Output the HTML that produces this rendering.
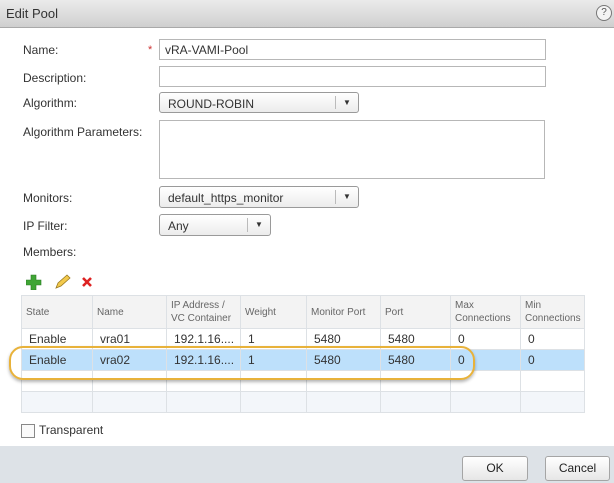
<!DOCTYPE html>
<html><head><style>
body{margin:0;width:614px;height:483px;position:relative;overflow:hidden;background:#fff;font-family:"Liberation Sans",sans-serif;font-size:12px;color:#333}
.a{position:absolute}
.lbl{position:absolute;left:23px;color:#333}
.in{position:absolute;border:1px solid #b7b7b7;background:#fff;box-sizing:border-box;padding:3px 5px;font-size:12px}
.sel{position:absolute;border:1px solid #9a9a9a;border-radius:3px;background:linear-gradient(#fff,#ececec);box-sizing:border-box;padding:4px 8px;font-size:12px}
.sel .ar{position:absolute;right:0;top:3px;bottom:3px;width:22px;border-left:1px solid #bbb;text-align:center;font-size:8px;line-height:14px}
table{position:absolute;left:21px;top:295px;width:563px;border-collapse:collapse;table-layout:fixed}
td{border:1px solid #dde1e5;padding:0 7px;height:20px;line-height:20px;font-size:12px;white-space:nowrap;overflow:hidden}
th{border:1px solid #dde1e5;background:#f3f3f3;font-weight:normal;text-align:left;color:#666;font-size:10px;padding:0 4px;height:32px;line-height:13px}
.btn{position:absolute;border:1px solid #a5a5a5;border-radius:3px;background:linear-gradient(#fff,#e6e6e6);text-align:center;line-height:23px;font-size:12px;color:#222}
</style></head><body>
<div class="a" style="left:0;top:0;width:614px;height:27px;background:linear-gradient(#ebebeb,#cfcfcf);border-bottom:1px solid #a9a9a9"></div>
<div class="a" style="left:6px;top:6px;font-size:13px;color:#333">Edit Pool</div>
<div class="a" style="left:596px;top:5px;width:14px;height:14px;border:1px solid #777;border-radius:50%;font-size:10px;text-align:center;line-height:14px;color:#555;background:#f4f4f4">?</div>

<div class="lbl" style="top:43px">Name:</div>
<div class="a" style="left:148px;top:44px;color:#c33;font-size:11px">*</div>
<div class="in" style="left:159px;top:39px;width:387px;height:21px">vRA-VAMI-Pool</div>
<div class="lbl" style="top:71px">Description:</div>
<div class="in" style="left:159px;top:66px;width:387px;height:21px"></div>
<div class="lbl" style="top:96px">Algorithm:</div>
<div class="sel" style="left:159px;top:92px;width:200px;height:21px">ROUND-ROBIN<div class="ar">▼</div></div>
<div class="lbl" style="top:125px">Algorithm Parameters:</div>
<div class="in" style="left:159px;top:120px;width:386px;height:59px"></div>
<div class="lbl" style="top:191px">Monitors:</div>
<div class="sel" style="left:159px;top:186px;width:200px;height:22px">default_https_monitor<div class="ar">▼</div></div>
<div class="lbl" style="top:219px">IP Filter:</div>
<div class="sel" style="left:159px;top:214px;width:112px;height:22px">Any<div class="ar">▼</div></div>
<div class="lbl" style="top:245px">Members:</div>

<svg class="a" style="left:26px;top:274px" width="70" height="16">
<path d="M5 1h5v5h5v5h-5v5h-5v-5h-5v-5h5z" fill="#3fa535" stroke="#2a7a22" stroke-width=".6"/>
<path d="M30 14l2-5 9-8 3 3-9 8z" fill="#f2c94c" stroke="#9a7a20" stroke-width=".8"/>
<path d="M57 4l8 8M65 4l-8 8" stroke="#d22" stroke-width="2.6"/>
</svg>

<table>
<colgroup><col style="width:71px"><col style="width:74px"><col style="width:74px"><col style="width:66px"><col style="width:74px"><col style="width:70px"><col style="width:70px"><col style="width:64px"></colgroup>
<tr><th>State</th><th>Name</th><th>IP Address /<br>VC Container</th><th>Weight</th><th>Monitor Port</th><th>Port</th><th>Max<br>Connections</th><th>Min<br>Connections</th></tr>
<tr><td>Enable</td><td>vra01</td><td>192.1.16....</td><td>1</td><td>5480</td><td>5480</td><td>0</td><td>0</td></tr>
<tr style="background:#bde0fb"><td>Enable</td><td>vra02</td><td>192.1.16....</td><td>1</td><td>5480</td><td>5480</td><td>0</td><td>0</td></tr>
<tr><td></td><td></td><td></td><td></td><td></td><td></td><td></td><td></td></tr>
<tr style="background:#f3f6fa"><td style="height:19px"></td><td></td><td></td><td></td><td></td><td></td><td></td><td></td></tr>
</table>
<div class="a" style="left:9px;top:346px;width:462px;height:30px;border:2px solid #e8b23a;border-radius:14px;box-shadow:0 2px 3px rgba(0,0,0,.3)"></div>

<div class="a" style="left:21px;top:424px;width:12px;height:12px;border:1px solid #888;background:#fafafa"></div>
<div class="a" style="left:39px;top:423px;font-size:12px">Transparent</div>

<div class="a" style="left:0;top:446px;width:614px;height:37px;background:#dde2e7"></div>
<div class="btn" style="left:462px;top:456px;width:64px;height:23px">OK</div>
<div class="btn" style="left:545px;top:456px;width:63px;height:23px">Cancel</div>
</body></html>
